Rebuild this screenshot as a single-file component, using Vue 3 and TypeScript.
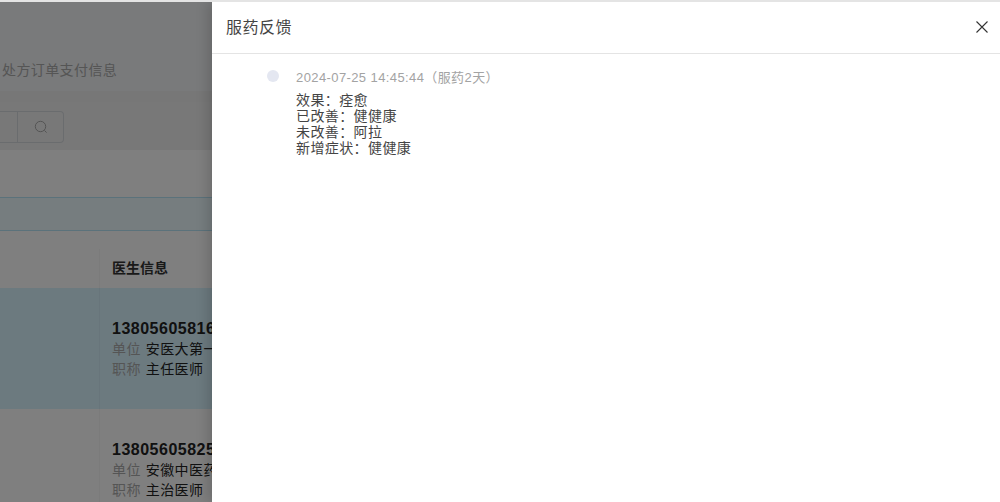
<script setup lang="ts">
interface Doctor { phone: string; unit: string; title: string; active: boolean }
const doctors: Doctor[] = [
  { phone: '13805605816', unit: '安医大第一附属医院', title: '主任医师', active: true },
  { phone: '13805605825', unit: '安徽中医药大学附属医院', title: '主治医师', active: false },
]
const feedback: string[] = ['效果：痊愈', '已改善：健健康', '未改善：阿拉', '新增症状：健健康']
</script>

<template>
  <div class="stage">
    <div class="page">
      <div class="head"><span class="crumb">处方订单支付信息</span></div>
      <div class="gap-band"></div>
      <div class="search-band">
        <div class="search">
          <span class="search-input"></span>
          <span class="search-btn">
            <svg width="14" height="14" viewBox="0 0 14 14" fill="none" stroke="#a8a8a8" stroke-width="1">
              <circle cx="6.5" cy="6.5" r="5.2" />
              <path d="M10.4 10.4 12.6 12.6" />
            </svg>
          </span>
        </div>
      </div>
      <div class="blank"></div>
      <div class="notice"></div>
      <div class="blank small"></div>
      <div class="thead">
        <div class="col-a"></div>
        <div class="col-b">医生信息</div>
      </div>
      <div v-for="d in doctors" :key="d.phone" class="row" :class="{ active: d.active }">
        <div class="col-a"></div>
        <div class="col-b">
          <div class="phone">{{ d.phone }}</div>
          <div class="line"><span class="label">单位</span>{{ d.unit }}</div>
          <div class="line"><span class="label">职称</span>{{ d.title }}</div>
        </div>
      </div>
    </div>
    <div class="mask"></div>
    <aside class="drawer">
      <header class="drawer-head">
        <span class="drawer-title">服药反馈</span>
        <svg class="close" width="12" height="12" viewBox="0 0 12 12" fill="none" stroke="#333" stroke-width="1.1">
          <path d="M.5.5 11.5 11.5M11.5.5 .5 11.5" />
        </svg>
      </header>
      <div class="timeline">
        <span class="dot"></span>
        <div class="entry">
          <div class="time">2024-07-25 14:45:44（服药2天）</div>
          <div class="body">
            <div v-for="item in feedback" :key="item">{{ item }}</div>
          </div>
        </div>
      </div>
    </aside>
  </div>
</template>

<style>
html, body { margin: 0; background: #fff; }
</style>

<style scoped>
.stage {
  position: relative;
  width: 1000px;
  height: 502px;
  overflow: hidden;
  box-sizing: border-box;
  border-top: 2px solid #e4e4e4;
  font-family: "Liberation Sans", "Noto Sans CJK SC", sans-serif;
}
.page { width: 1000px; background: #fff; }
.head { height: 89px; background: #f2f4f6; box-sizing: border-box; padding: 58px 0 0 2px; }
.crumb { font-size: 14px; line-height: 20px; letter-spacing: .4px; color: #aaa; display: block; }
.gap-band { height: 11px; background: #eee; }
.search-band { height: 48px; background: #f1f1f1; display: flex; align-items: center; }
.search { display: flex; height: 32px; width: 64px; box-sizing: border-box; border: 1px solid #d4d8dc; border-left: 0; border-radius: 0 4px 4px 0; margin-top: 2px; }
.search-input { width: 17px; border-right: 1px solid #d4d8dc; }
.search-btn { flex: 1; display: flex; align-items: center; justify-content: center; }
.blank { height: 47px; background: #fff; }
.blank.small { height: 18px; }
.notice { height: 34px; box-sizing: border-box; background: #ecfaff; border-top: 1px solid #b7e4f6; border-bottom: 1px solid #b7e4f6; }
.thead, .row { display: flex; }
.col-a { width: 99px; border-right: 1px solid rgba(0, 0, 0, .035); }
.col-b { padding-left: 12px; }
.thead { height: 39px; background: #fff; font-size: 14px; font-weight: 700; color: #333; line-height: 38px; }
.row { height: 121px; background: #fff; font-size: 14px; line-height: 20px; color: #222; }
.row.active { background: #d9f4ff; }
.phone { margin-top: 30px; font-weight: 700; font-size: 16px; line-height: 21px; letter-spacing: .5px; color: #222; white-space: nowrap; }
.line { letter-spacing: .4px; white-space: nowrap; }
.label { color: #aaa; margin-right: 5px; }
.mask { position: absolute; inset: 0; background: rgba(0, 0, 0, .5); }
.drawer {
  position: absolute;
  top: 0;
  right: 0;
  bottom: 0;
  width: 788px;
  background: #fff;
  box-shadow: -4px 0 12px rgba(0, 0, 0, .16);
}
.drawer-head {
  height: 52px;
  box-sizing: border-box;
  border-bottom: 1px solid #e4e4e4;
  padding: 0 12px 0 14px;
  display: flex;
  align-items: center;
  justify-content: space-between;
}
.drawer-title { font-size: 16px; letter-spacing: .5px; color: #444; margin-bottom: 4px; }
.close { margin-bottom: 1px; }
.timeline { display: flex; padding: 15px 0 0 55px; }
.dot { width: 12px; height: 12px; border-radius: 50%; background: #e4e7f1; margin: 1px 17px 0 0; flex: none; }
.time { font-size: 13px; line-height: 18px; letter-spacing: .4px; color: #a3a3a3; }
.body { margin-top: 5px; font-size: 14px; line-height: 16px; letter-spacing: .4px; color: #444; }
</style>
